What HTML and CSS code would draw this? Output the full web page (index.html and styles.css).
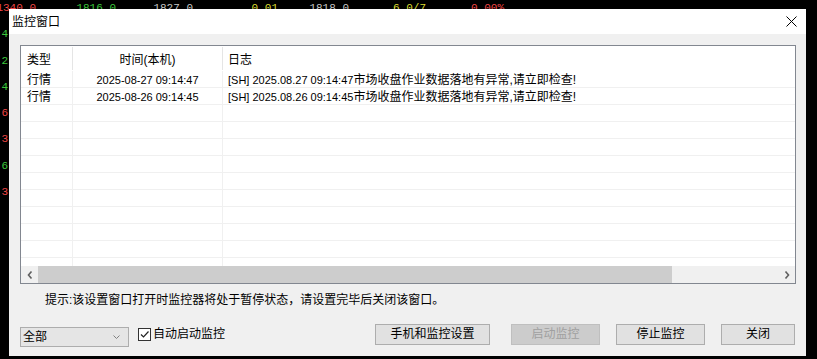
FILE: index.html
```html
<!DOCTYPE html>
<html lang="zh-CN">
<head>
  <meta charset="UTF-8" />
  <title>监控窗口</title>
  <link rel="stylesheet" href="styles.css">
</head>
<body>

  <!-- quote board behind the dialog -->
  <div class="quotes">
    <div class="quote-top">
      <span class="cell red">1340.0</span>
      <span class="cell green">1816.0</span>
      <span class="cell white">1827.0</span>
      <span class="cell yellow">0.01</span>
      <span class="cell white">1818.0</span>
      <span class="cell yellow">6.0/7</span>
      <span class="cell red">0.00%</span>
    </div>
    <div class="quote-side green">1823.4</div>
    <div class="quote-side green">1821.2</div>
    <div class="quote-side green">1819.4</div>
    <div class="quote-side red">1826.6</div>
    <div class="quote-side red">1824.3</div>
    <div class="quote-side green">1817.6</div>
    <div class="quote-side red">1825.3</div>
  </div>

  <div class="dialog">
    <div class="titlebar">
      <span class="title">监控窗口</span>
      <svg class="close" width="11" height="11" viewBox="0 0 11 11">
        <path d="M0.5 0.5 L10.5 10.5 M10.5 0.5 L0.5 10.5" stroke="#000" stroke-width="1" fill="none" />
      </svg>
    </div>

    <div class="content">
      <div class="list">
        <div class="list-head">
          <div class="cell c1">类型</div>
          <div class="cell c2">时间(本机)</div>
          <div class="cell c3">日志</div>
        </div>
        <div class="rows">
          <div class="row">
            <div class="cell c1">行情</div>
            <div class="cell c2 num">2025-08-27 09:14:47</div>
            <div class="cell c3"><span class="num">[SH] 2025.08.27 09:14:47</span>市场收盘作业数据落地有异常,请立即检查!</div>
          </div>
          <div class="row">
            <div class="cell c1">行情</div>
            <div class="cell c2 num">2025-08-26 09:14:45</div>
            <div class="cell c3"><span class="num">[SH] 2025.08.26 09:14:45</span>市场收盘作业数据落地有异常,请立即检查!</div>
          </div>
          <div class="row"><div class="cell"></div><div class="cell"></div><div class="cell"></div></div>
          <div class="row"><div class="cell"></div><div class="cell"></div><div class="cell"></div></div>
          <div class="row"><div class="cell"></div><div class="cell"></div><div class="cell"></div></div>
          <div class="row"><div class="cell"></div><div class="cell"></div><div class="cell"></div></div>
          <div class="row"><div class="cell"></div><div class="cell"></div><div class="cell"></div></div>
          <div class="row"><div class="cell"></div><div class="cell"></div><div class="cell"></div></div>
          <div class="row"><div class="cell"></div><div class="cell"></div><div class="cell"></div></div>
          <div class="row"><div class="cell"></div><div class="cell"></div><div class="cell"></div></div>
          <div class="row"><div class="cell"></div><div class="cell"></div><div class="cell"></div></div>
          <div class="row"><div class="cell"></div><div class="cell"></div><div class="cell"></div></div>
        </div>
        <div class="hscroll">
          <div class="arrow">
            <svg width="6" height="8" viewBox="0 0 6 8"><path d="M4.5 0.5 L1.5 4 L4.5 7.5" stroke="#606060" stroke-width="1.6" fill="none" /></svg>
          </div>
          <div class="thumb"></div>
          <div class="track"></div>
          <div class="arrow">
            <svg width="6" height="8" viewBox="0 0 6 8"><path d="M1.5 0.5 L4.5 4 L1.5 7.5" stroke="#606060" stroke-width="1.6" fill="none" /></svg>
          </div>
        </div>
      </div>

      <p class="hint">提示:该设置窗口打开时监控器将处于暂停状态，请设置完毕后关闭该窗口。</p>

      <div class="controls">
        <div class="combo">
          <span>全部</span>
          <svg width="7" height="4" viewBox="0 0 7 4"><path d="M0.5 0.5 L3.5 3.5 L6.5 0.5" stroke="#808080" stroke-width="1" fill="none" /></svg>
        </div>
        <label class="check">
          <span class="box">
            <svg width="11" height="11" viewBox="0 0 11 11"><path d="M2 5.5 L4.5 8 L9.5 2.5" stroke="#222" stroke-width="1.2" fill="none" /></svg>
          </span>
          <span>自动启动监控</span>
        </label>
        <button class="btn btn-phone">手机和监控设置</button>
        <button class="btn btn-start" disabled>启动监控</button>
        <button class="btn btn-stop">停止监控</button>
        <button class="btn btn-close">关闭</button>
      </div>
    </div>
  </div>

</body>
</html>
```

FILE: styles.css
```css
body {
  margin: 0;
  width: 817px;
  height: 359px;
  overflow: hidden;
  position: relative;
  background: #000;
  color: #000;
  font-family: "Liberation Sans", "Noto Sans CJK SC", sans-serif;
  font-size: 12px;
}

/* quote board */
.quotes {
  margin-top: -5px;
  font-family: "Liberation Mono", monospace;
  font-size: 11px;
  line-height: 26.3px;
  white-space: nowrap;
}
.quote-top {
  display: grid;
  grid-template-columns: 36px 80px 77px 85px 71px 77px 78px;
}
.quote-top .cell,
.quote-side {
  display: flex;
  justify-content: flex-end;
}
.quote-side {
  width: 8px;
}
.red { color: #f04646; }
.green { color: #3cc83c; }
.yellow { color: #dcdc32; }
.white { color: #c8c8c8; }

/* dialog */
.dialog {
  position: absolute;
  left: 9px;
  top: 9px;
  width: 797px;
  height: 347px;
  background: #f0f0f0;
  display: flex;
  flex-direction: column;
}
.titlebar {
  height: 25px;
  flex: none;
  background: #fff;
  display: flex;
  align-items: center;
  padding: 0 9px 0 3px;
}
.title {
  flex: 1;
  line-height: 14px;
}
.close {
  display: block;
}

.content {
  padding: 11px 10px 0 11px;
  display: flex;
  flex-direction: column;
}

.list {
  height: 239px;
  box-sizing: border-box;
  border: 1px solid #828790;
  background: #fff;
  display: flex;
  flex-direction: column;
  overflow: hidden;
}
.list-head,
.row {
  display: grid;
  grid-template-columns: 52px 150px 1fr;
  white-space: nowrap;
}
.list-head {
  height: 25px;
  flex: none;
}
.list-head .cell {
  margin: 1px 0;
  display: flex;
  align-items: center;
  padding-top: 3px;
  line-height: 14px;
  box-sizing: border-box;
}
.list-head .c1,
.list-head .c2 {
  border-right: 1px solid #e5e5e5;
}
.rows {
  flex: 1;
  overflow: hidden;
}
.row {
  height: 17px;
  box-sizing: border-box;
  border-bottom: 1px solid #f0f0f0;
}
.row .cell {
  line-height: 16px;
  padding-top: 1px;
  box-sizing: border-box;
  overflow: hidden;
}
.row .cell:nth-child(1),
.row .cell:nth-child(2) {
  border-right: 1px solid #f0f0f0;
}
.c1 {
  padding-left: 6px;
}
.c2 {
  justify-content: center;
  text-align: center;
}
.c3 {
  padding-left: 5px;
}
.num {
  font-size: 11px;
}

.hscroll {
  height: 17px;
  flex: none;
  display: flex;
  background: #f0f0f0;
}
.arrow {
  width: 17px;
  display: flex;
  align-items: center;
  justify-content: center;
}
.arrow svg {
  display: block;
}
.thumb {
  width: 634px;
  background: #cdcdcd;
}
.track {
  flex: 1;
}

.hint {
  margin: 8px 0 0 25px;
  line-height: 16px;
}

.controls {
  display: flex;
  align-items: flex-start;
  margin-top: 16px;
}
.combo {
  width: 109px;
  height: 20px;
  margin-top: 3px;
  box-sizing: border-box;
  border: 1px solid #adadad;
  background: #e5e5e5;
  display: flex;
  align-items: center;
  justify-content: space-between;
  padding: 0 8px 0 2px;
  line-height: 16px;
}
.check {
  display: flex;
  align-items: center;
  gap: 2px;
  margin: 3px 0 0 9px;
  height: 14px;
  line-height: 14px;
}
.box {
  width: 13px;
  height: 13px;
  box-sizing: border-box;
  border: 1px solid #333;
  background: #fff;
  display: flex;
  align-items: center;
  justify-content: center;
}
.box svg {
  display: block;
}
.btn {
  height: 21px;
  box-sizing: border-box;
  border: 1px solid #adadad;
  background: #e1e1e1;
  color: #000;
  font-family: inherit;
  font-size: 12px;
  line-height: 19px;
  padding: 0;
  margin-left: 16px;
}
.btn:disabled {
  background: #cccccc;
  border-color: #bfbfbf;
  color: #a0a0a0;
}
.btn-phone {
  width: 115px;
  margin-left: auto;
}
.btn-start {
  width: 89px;
  margin-left: 21px;
}
.btn-stop {
  width: 89px;
}
.btn-close {
  width: 74px;
  margin-right: 1px;
}
```
